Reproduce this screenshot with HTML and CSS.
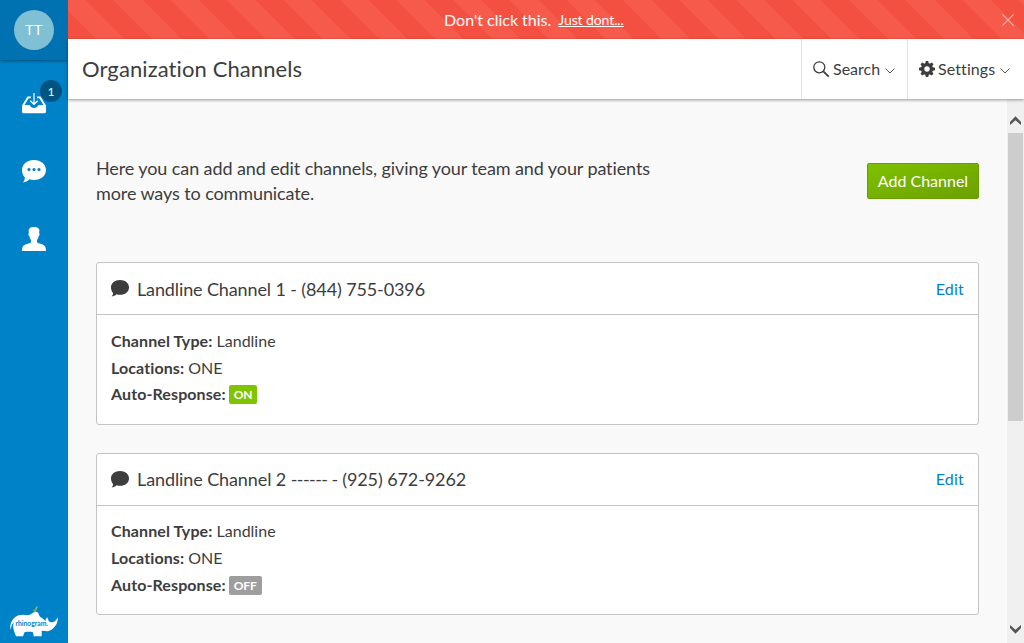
FILE: index.html
```html
<!DOCTYPE html>
<html lang="en">
<head>
<meta charset="utf-8">
<title>Organization Channels</title>
<link rel="stylesheet" href="styles.css">
</head>
<body>
<div class="app">
  <nav class="sidebar">
    <div class="profile"><div class="avatar">TT</div></div>
    <a class="nav-item">
      <svg width="24" height="21" viewBox="0 0 24 21"><path d="M0 12.500 5.500 3.500H9v1.700H6.700L2.500 12h4.700c1 0 1.300 2.900 4.800 2.900s3.800-2.900 4.800-2.900h4.700l-4.200-6.800H15V3.500h3.500l5.500 9v6.200q0 1.500-1.500 1.500h-21Q0 20.200 0 18.700Z" fill="#fff"/><path d="M12 0v11M8.300 7.700 12 11.300l3.700-3.600" fill="none" stroke="#fff" stroke-width="1.200"/></svg>
      <span class="badge">1</span>
    </a>
    <a class="nav-item">
      <svg width="24" height="23" viewBox="0 0 24 23"><path d="M12 0C18.800 0 24 4.200 24 10s-5.200 10-12 10c-1.700 0-3.200-.2-4.600-.7C5.700 21.400 3.300 22.300.900 22.400c1-1 2-2.800 2-4.900C1.100 15.700 0 13 0 10 0 4.200 5.200 0 12 0Z" fill="#fff"/><g fill="#0082c8"><circle cx="7" cy="9.500" r="1.550"/><circle cx="12" cy="9.500" r="1.550"/><circle cx="17" cy="9.500" r="1.550"/></g></svg>
    </a>
    <a class="nav-item">
      <svg width="24" height="24" viewBox="0 0 24 24"><path d="M12 0c2 0 3.100.3 3.800.9 1.300.4 1.900 1.600 1.500 3.700l-.2 1.300c.9.2.6 2.800-.5 3.300-.3 1.700-.9 2.800-1.600 3.600v2c0 1 1 1.300 2.600 1.700C22.300 17.600 24 19 24 24H0c0-5 1.700-6.400 6.400-7.500C8 16.100 9 15.800 9 14.800v-2c-.7-.8-1.300-1.900-1.600-3.600-1.100-.5-1.400-3.100-.5-3.300L6.700 4C6.500 1.500 8.500 0 12 0Z" fill="#fff"/></svg>
    </a>
    <div class="logo">
      <svg width="50" height="33" viewBox="0 0 50 33"><path d="M2 24C0 20 2.500 14 6 11.300 10 8 15 8.500 19 9.300c2.500-.3 4-2 6-3 1.500-.7 3-.7 4 .4 1 1.300 1 2.800 2 4 1.600 1 3.600 2.300 5.500 4.300.2-1.600.7-2.800 1.600-3.700 1 1.200 1 2.700 1.900 4.200 1.200.9 3 1 4.300.5 2-.8 3.400-2.500 4.400-4.700.3 3.700-.7 6.700-2.700 9-2 2.500-4 4.500-7 4.900-2.500.3-4.500-.8-6.300-.3v5.400h-8l-.7-4c-3.500-.6-6-.6-8.500 0l-1.500 4H7L5 25c-1-3-1.200-6-.3-8.500C2.500 18.500 2 21 2 24Z" fill="#fff"/><path d="M23.300 4.300c1.700.3 2.800-.5 3.200-2 .2-1.600 1.200-2 2.700-1.600-1.200.6-.9 2.100-1.800 3-.5.600-1.100.9-1.300 2.600h-.8l.2-1.500c-.8.100-1.500 0-2.200-.5Z" fill="#86c440"/><text x="6.500" y="19.500" class="logo-text" textLength="32.500" lengthAdjust="spacingAndGlyphs">rhinogram.</text></svg>
    </div>
  </nav>
  <main class="main">
    <div class="banner">
      <span>Don't click this.</span><a class="banner-link">Just dont...</a>
      <svg class="close" width="12" height="12" viewBox="0 0 12 12"><path d="m.3.300 11.400 11.400M11.700.300.300 11.700" stroke="#ffb5ad" stroke-width="1.100"/></svg>
    </div>
    <header class="header">
      <h1 class="title">Organization Channels</h1>
      <div class="menu search">
        <svg width="17" height="17" viewBox="0 0 17 17"><circle cx="6.300" cy="6.300" r="5.500" fill="none" stroke="#3d3d3d" stroke-width="1.300"/><path d="m10.300 10.300 5.500 5.300" stroke="#3d3d3d" stroke-width="1.800"/></svg>
        <span class="menu-label">Search</span>
        <svg class="caret" width="10" height="6" viewBox="0 0 10 6"><path d="m.5.500 4.500 4.500L9.500.500" fill="none" stroke="#555"/></svg>
      </div>
      <div class="menu settings">
        <svg width="16" height="16" viewBox="-8 -8 16 16"><g fill="#3d3d3d"><path id="tooth" d="M-1.900-5-1.200-8h2.400l.7 3v10l-.7 3h-2.400l-.7-3Z"/><use href="#tooth" transform="rotate(45)"/><use href="#tooth" transform="rotate(90)"/><use href="#tooth" transform="rotate(135)"/><circle r="6"/></g><circle r="2.700" fill="#fff"/></svg>
        <span class="menu-label">Settings</span>
        <svg class="caret" width="10" height="6" viewBox="0 0 10 6"><path d="m.5.500 4.500 4.500L9.500.500" fill="none" stroke="#555"/></svg>
      </div>
    </header>
    <div class="viewport">
      <div class="content">
        <section class="intro">
          <p class="description">Here you can add and edit channels, giving your team and your patients more ways to communicate.</p>
          <button class="add-button">Add Channel</button>
        </section>
        <article class="card first">
          <div class="card-head">
            <svg class="bubble" width="18" height="17" viewBox="0 0 18 17"><path d="M9 0c5.200 0 9 3.200 9 7.400s-3.800 7.400-9 7.400c-1.300 0-2.400-.1-3.500-.5C4.200 15.700 2.400 16.400.600 16.500c.8-.8 1.500-2 1.500-3.500C.8 11.600 0 9.600 0 7.400 0 3.200 3.800 0 9 0Z" fill="#3d3d3d"/></svg>
            <h2 class="card-title">Landline Channel 1 - (844) 755-0396</h2><a class="edit">Edit</a>
          </div>
          <div class="card-body">
            <div><b>Channel Type:</b> Landline</div>
            <div><b>Locations:</b> ONE</div>
            <div><b>Auto-Response:</b> <span class="tag on">ON</span></div>
          </div>
        </article>
        <article class="card second">
          <div class="card-head">
            <svg class="bubble" width="18" height="17" viewBox="0 0 18 17"><path d="M9 0c5.200 0 9 3.200 9 7.400s-3.800 7.400-9 7.400c-1.300 0-2.400-.1-3.500-.5C4.200 15.700 2.400 16.400.600 16.500c.8-.8 1.500-2 1.500-3.500C.8 11.600 0 9.600 0 7.400 0 3.200 3.800 0 9 0Z" fill="#3d3d3d"/></svg>
            <h2 class="card-title">Landline Channel 2 <span class="dashes">------ -</span> (925) 672-9262</h2><a class="edit">Edit</a>
          </div>
          <div class="card-body">
            <div><b>Channel Type:</b> Landline</div>
            <div><b>Locations:</b> ONE</div>
            <div><b>Auto-Response:</b> <span class="tag off">OFF</span></div>
          </div>
        </article>
      </div>
      <div class="scrollbar">
        <svg width="11" height="9" viewBox="0 0 11 9"><path d="M0 6 5.500.300 11 6v3L5.500 4.200 0 9Z" fill="#555"/></svg>
        <div class="thumb"></div>
        <svg class="down" width="11" height="9" viewBox="0 0 11 9"><path d="M0 3 5.500 8.700 11 3V0L5.500 4.800 0 0Z" fill="#555"/></svg>
      </div>
    </div>
  </main>
</div>
</body>
</html>
```
FILE: styles.css
```css
* { box-sizing: border-box; }
body { margin: 0; font-family: Lato, "Liberation Sans", sans-serif; font-size: 16px; font-variant-ligatures: none; color: #3d3d3d; overflow: hidden; }
svg { display: block; flex: none; }
h1, h2, p { margin: 0; font-weight: 400; }
.app { display: flex; height: 643px; }

.sidebar { width: 68px; flex: none; background: #0082c8; display: flex; flex-direction: column; }
.profile { height: 60px; flex: none; background: #0072b1; display: flex; align-items: center; justify-content: center; box-shadow: 0 1px 3px rgba(0, 0, 0, .45); }
.avatar { width: 40px; height: 40px; border-radius: 50%; background: #80c0d4; color: #fff; font-size: 14px; letter-spacing: .5px; line-height: 39px; text-align: center; }
.nav-item { position: relative; height: 68px; padding-top: 8px; display: flex; align-items: center; justify-content: center; top: 5px; }
.badge { position: absolute; left: 40px; top: 15px; width: 22px; height: 22px; border-radius: 50%; background: #005481; color: #fff; font-size: 12px; line-height: 23px; text-align: center; }
.logo { margin: auto 0 4px 9px; }
.logo-text { font: bold 7.500px Lato, sans-serif; fill: #0082c8; }

.main { flex: 1; display: flex; flex-direction: column; min-width: 0; }
.banner { position: relative; height: 39px; flex: none; background: repeating-linear-gradient(45deg, #f45041 0, #f45041 20px, #f55a4a 20px, #f55a4a 40px); color: #fff; display: flex; align-items: center; padding: 0 0 1px 376px; gap: 7px; }
.banner-link { font-size: 14px; letter-spacing: -.1px; text-decoration: underline; }
.close { position: absolute; right: 10px; top: 14px; }

.header { position: relative; height: 60px; flex: none; background: #fff; box-shadow: 0 1px 3px rgba(0, 0, 0, .4); display: flex; }
.title { flex: 1; padding-left: 14px; font-size: 22px; line-height: 60px; letter-spacing: .1px; }
.menu { display: flex; align-items: center; border-left: 1px solid #e5e5e5; }
.menu-label { padding-bottom: 2px; }
.search { width: 106px; padding-left: 11px; gap: 3px; }
.settings { width: 117px; padding-left: 11px; gap: 3px; }
.settings .menu-label { letter-spacing: .1px; }
.caret { margin: 3px 0 0 2px; }

.viewport { flex: 1; display: flex; background: #f9f9f9; min-height: 0; }
.content { flex: 1; padding: 57px 28px 0; }
.intro { display: flex; justify-content: space-between; height: 106px; }
.description { width: 580px; font-size: 18px; line-height: 25px; letter-spacing: -.1px; }
.add-button { margin-top: 7px; width: 112px; height: 36px; padding: 0 0 2px; border: 1px solid #6b9f00; border-radius: 2px; background: linear-gradient(to bottom right, #7fc100, #6ca000); color: #fff; font: 16px Lato, sans-serif; }

.card { height: 162px; background: #fff; border: 1px solid #c4c4c4; border-radius: 3px; margin-bottom: 28px; }
.card.first { height: 163px; }
.card-head { height: 52px; padding: 0 14px; display: flex; align-items: center; border-bottom: 1px solid #c4c4c4; }
.bubble { margin-right: 8px; }
.card-title { flex: 1; font-size: 18px; letter-spacing: -.12px; }
.second .card-title { letter-spacing: -.1px; padding-bottom: 2px; }
.dashes { letter-spacing: -.55px; }
.edit { color: #0082c8; letter-spacing: .2px; }
.second .edit { padding-bottom: 2px; }
.card-body { padding: 13px 14px; line-height: 26.670px; }
.second .card-body { padding-top: 11px; line-height: 27px; }
.card-body b { letter-spacing: .1px; }
.tag { display: inline-block; margin-left: -1px; vertical-align: 1px; height: 19px; padding: 0 5px; border-radius: 2px; color: #fff; font-size: 12px; font-weight: 700; letter-spacing: -.2px; line-height: 20px; }
.on { background: #80c400; }
.off { background: #9e9e9e; }

.scrollbar { width: 17px; background: #f0f0f0; display: flex; flex-direction: column; align-items: center; padding: 17px 0 9px; }
.thumb { width: 15px; height: 288px; margin-top: 8px; background: #cdcdcd; }
.down { margin-top: auto; }
```
